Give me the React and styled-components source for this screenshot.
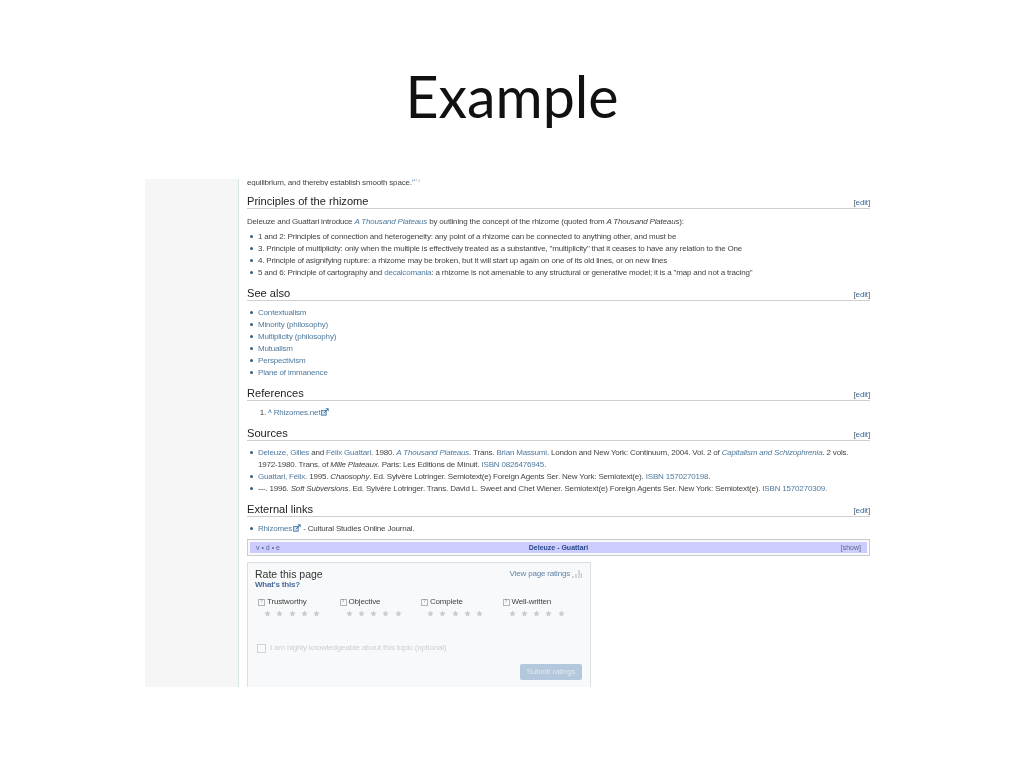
import React from 'react'
import styled, { createGlobalStyle } from 'styled-components'

const Global = createGlobalStyle`
  html, body { margin: 0; padding: 0; background: #fff; }
  body { width: 1024px; height: 768px; overflow: hidden; }
`

const Ext = () => (
  <ExtIcon viewBox="0 0 10 10">
    <rect x="0.5" y="3" width="6" height="6" fill="#cfe0ef" stroke="#5a86b0" strokeWidth="1.2" />
    <path d="M4 6 L9 1 M6 1 H9 V4" fill="none" stroke="#3a6ea5" strokeWidth="1.2" />
  </ExtIcon>
)

const Star = () => (
  <StarIcon viewBox="0 0 10 10">
    <path d="M5 0.5 L6.3 3.6 L9.6 3.9 L7.1 6 L7.9 9.3 L5 7.6 L2.1 9.3 L2.9 6 L0.4 3.9 L3.7 3.6 Z" fill="#c9cbcd" />
  </StarIcon>
)

const Section = ({ title, children }) => (
  <>
    <Heading>
      <span>{title}</span>
      <EditLink>[<a>edit</a>]</EditLink>
    </Heading>
    {children}
  </>
)

const ratings = ['Trustworthy', 'Objective', 'Complete', 'Well-written']
const seeAlso = [
  'Contextualism',
  'Minority (philosophy)',
  'Multiplicity (philosophy)',
  'Mutualism',
  'Perspectivism',
  'Plane of immanence',
]

export default function App() {
  return (
    <Slide>
      <Global />
      <Title>Example</Title>
      <Shot>
        <Sidebar />
        <Content>
          <ClippedLine>equilibrium, and thereby establish smooth space.<sup>[17]</sup></ClippedLine>

          <Section title="Principles of the rhizome">
            <Para>
              Deleuze and Guattari introduce <Link as="i">A Thousand Plateaus</Link> by outlining the concept of the rhizome (quoted from <i>A Thousand Plateaus</i>):
            </Para>
            <Bullets>
              <li>1 and 2: Principles of connection and heterogeneity: any point of a rhizome can be connected to anything other, and must be</li>
              <li>3. Principle of multiplicity: only when the multiple is effectively treated as a substantive, "multiplicity" that it ceases to have any relation to the One</li>
              <li>4. Principle of asignifying rupture: a rhizome may be broken, but it will start up again on one of its old lines, or on new lines</li>
              <li>5 and 6: Principle of cartography and <Link>decalcomania</Link>: a rhizome is not amenable to any structural or generative model; it is a "map and not a tracing"</li>
            </Bullets>
          </Section>

          <Section title="See also">
            <Bullets>
              {seeAlso.map(item => <li key={item}><Link>{item}</Link></li>)}
            </Bullets>
          </Section>

          <Section title="References">
            <Refs>
              <li><b>^</b> <Link>Rhizomes.net</Link><Ext /></li>
            </Refs>
          </Section>

          <Section title="Sources">
            <Bullets>
              <li>
                <Link>Deleuze, Gilles</Link> and <Link>Félix Guattari</Link>. 1980. <Link as="i">A Thousand Plateaus</Link>. Trans. <Link>Brian Massumi</Link>. London and New York: Continuum, 2004. Vol. 2 of <Link as="i">Capitalism and Schizophrenia</Link>. 2 vols.<br />
                1972-1980. Trans. of <i>Mille Plateaux</i>. Paris: Les Editions de Minuit. <Link>ISBN 0826476945</Link>.
              </li>
              <li><Link>Guattari, Félix</Link>. 1995. <i>Chaosophy</i>. Ed. Sylvère Lotringer. Semiotext(e) Foreign Agents Ser. New York: Semiotext(e). <Link>ISBN 1570270198</Link>.</li>
              <li>---. 1996. <i>Soft Subversions</i>. Ed. Sylvère Lotringer. Trans. David L. Sweet and Chet Wiener. Semiotext(e) Foreign Agents Ser. New York: Semiotext(e). <Link>ISBN 1570270309</Link>.</li>
            </Bullets>
          </Section>

          <Section title="External links">
            <Bullets>
              <li><Link>Rhizomes</Link><Ext /> - Cultural Studies Online Journal.</li>
            </Bullets>
          </Section>

          <Navbox>
            <NavInner>
              <NavSide>v • d • e</NavSide>
              <NavTitle>Deleuze - Guattari</NavTitle>
              <NavShow>[show]</NavShow>
            </NavInner>
          </Navbox>

          <RateBox>
            <RateHead>
              <div>
                <RateTitle>Rate this page</RateTitle>
                <WhatsThis>What's this?</WhatsThis>
              </div>
              <ViewRatings>
                View page ratings
                <BarsIcon viewBox="0 0 10 8">
                  <path d="M1 8V6M4 8V4M7 8V0M9.5 8V3" stroke="#c4c8cc" strokeWidth="1.4" />
                </BarsIcon>
              </ViewRatings>
            </RateHead>
            <RatingGrid>
              {ratings.map(name => (
                <div key={name}>
                  <RatingLabel><HelpBox>?</HelpBox>{name}</RatingLabel>
                  <Stars>{[0, 1, 2, 3, 4].map(i => <Star key={i} />)}</Stars>
                </div>
              ))}
            </RatingGrid>
            <Expert><CheckBox />I am highly knowledgeable about this topic (optional)</Expert>
            <SubmitRow><Submit>Submit ratings</Submit></SubmitRow>
          </RateBox>
        </Content>
      </Shot>
    </Slide>
  )
}

const Slide = styled.div`
  width: 1024px;
  height: 768px;
  background: #fff;
  overflow: hidden;
`
const Title = styled.h1`
  margin: 0;
  height: 179px;
  padding-top: 63px;
  box-sizing: border-box;
  text-align: center;
  font-family: Lato, "Open Sans", sans-serif;
  font-weight: 400;
  font-size: 57.3px;
  line-height: 66px;
  color: #111;
`
const Shot = styled.div`
  display: flex;
  width: 725px;
  height: 508px;
  margin-left: 145px;
  overflow: hidden;
  font-family: "Liberation Sans", Arial, sans-serif;
  font-size: 8px;
  letter-spacing: -0.18px;
  color: #444;
  filter: blur(0.35px);
`
const Sidebar = styled.div`
  width: 93px;
  flex: none;
  background: #f6f6f6;
  border-right: 1px solid #d5e6e6;
`
const Content = styled.div`
  flex: 1;
  padding-left: 8px;
  min-width: 0;
`
const ClippedLine = styled.div`
  height: 7px;
  line-height: 4px;
  overflow: hidden;
  margin-bottom: 6px;
  white-space: nowrap;
  sup { font-size: 5px; line-height: 0; color: #7a9ab8; }
`
const Heading = styled.div`
  display: flex;
  justify-content: space-between;
  align-items: baseline;
  height: 16px;
  line-height: 18px;
  font-size: 11.1px;
  letter-spacing: 0;
  color: #222;
  border-bottom: 1px solid #cfcfcf;
`
const EditLink = styled.span`
  font-size: 8px;
  letter-spacing: -0.15px;
  color: #555;
  a { color: #3a6a9a; }
`
const Para = styled.p`
  margin: 7px 0 0;
  line-height: 11px;
  white-space: nowrap;
`
const Link = styled.span`
  color: #4f7a9e;
`
const Bullets = styled.ul`
  list-style: none;
  margin: 6px 0 5px;
  padding: 0 0 0 11px;
  white-space: nowrap;
  ${Para} + & { margin-top: 4px; }
  li { position: relative; line-height: 12px; }
  li::before {
    content: "";
    position: absolute;
    left: -8px;
    top: 4px;
    width: 3px;
    height: 3px;
    border-radius: 50%;
    background: #2f5f7f;
  }
`
const Refs = styled.ol`
  margin: 6px 0 5px;
  padding: 0 0 0 21px;
  li { line-height: 12px; }
  b { font-weight: 700; font-size: 6.5px; color: #4f7a9e; }
`
const ExtIcon = styled.svg`
  width: 8px;
  height: 8px;
  margin-left: 1px;
  vertical-align: -1px;
`
const Navbox = styled.div`
  margin-top: -1px;
  border: 1px solid #c8ccd0;
  background: #f9f9f9;
  padding: 2px;
  height: 17px;
  box-sizing: border-box;
`
const NavInner = styled.div`
  display: grid;
  grid-template-columns: 1fr auto 1fr;
  align-items: center;
  height: 11px;
  padding: 0 6px;
  background: #ccccff;
  font-size: 7px;
  letter-spacing: 0;
`
const NavSide = styled.span`
  color: #5a6a8a;
`
const NavTitle = styled.span`
  color: #2a4a8a;
  font-weight: 700;
`
const NavShow = styled.span`
  justify-self: end;
  color: #5a6a8a;
`
const RateBox = styled.div`
  width: 344px;
  height: 125px;
  box-sizing: border-box;
  margin-top: 6px;
  padding: 5px 8px 0 7px;
  background: #f8f9fa;
  border: 1px solid #dcdfe2;
  border-bottom: 0;
`
const RateHead = styled.div`
  display: flex;
  justify-content: space-between;
  align-items: flex-start;
`
const RateTitle = styled.div`
  font-size: 10.5px;
  letter-spacing: 0;
  line-height: 12px;
  color: #333;
`
const WhatsThis = styled.div`
  line-height: 10px;
  font-weight: 700;
  color: #4a6a9a;
`
const ViewRatings = styled.div`
  display: flex;
  align-items: center;
  gap: 2px;
  line-height: 12px;
  color: #5f85a8;
`
const BarsIcon = styled.svg`
  width: 10px;
  height: 8px;
`
const RatingGrid = styled.div`
  display: grid;
  grid-template-columns: repeat(4, 81.5px);
  margin: 6px 0 0 3px;
`
const RatingLabel = styled.div`
  display: flex;
  align-items: center;
  gap: 2px;
  line-height: 12px;
  color: #444;
`
const HelpBox = styled.span`
  display: inline-flex;
  align-items: center;
  justify-content: center;
  width: 5px;
  height: 5px;
  border: 1px solid #b5b5b5;
  font-size: 4.5px;
  color: #888;
`
const Stars = styled.div`
  display: flex;
  gap: 5.3px;
  margin: 0 0 0 6px;
  padding-top: 2px;
`
const StarIcon = styled.svg`
  width: 7px;
  height: 7px;
`
const Expert = styled.div`
  display: flex;
  align-items: center;
  gap: 4px;
  margin: 25px 0 0 2px;
  line-height: 12px;
  color: #cdcfd1;
`
const CheckBox = styled.span`
  width: 7px;
  height: 7px;
  border: 1px solid #d0d2d4;
  background: #fafafa;
`
const SubmitRow = styled.div`
  display: flex;
  justify-content: flex-end;
  margin-top: 10px;
`
const Submit = styled.div`
  width: 62px;
  height: 16px;
  line-height: 16px;
  text-align: center;
  color: #dfe7ef;
  background: #b3c8dc;
  border-radius: 2px;
`
